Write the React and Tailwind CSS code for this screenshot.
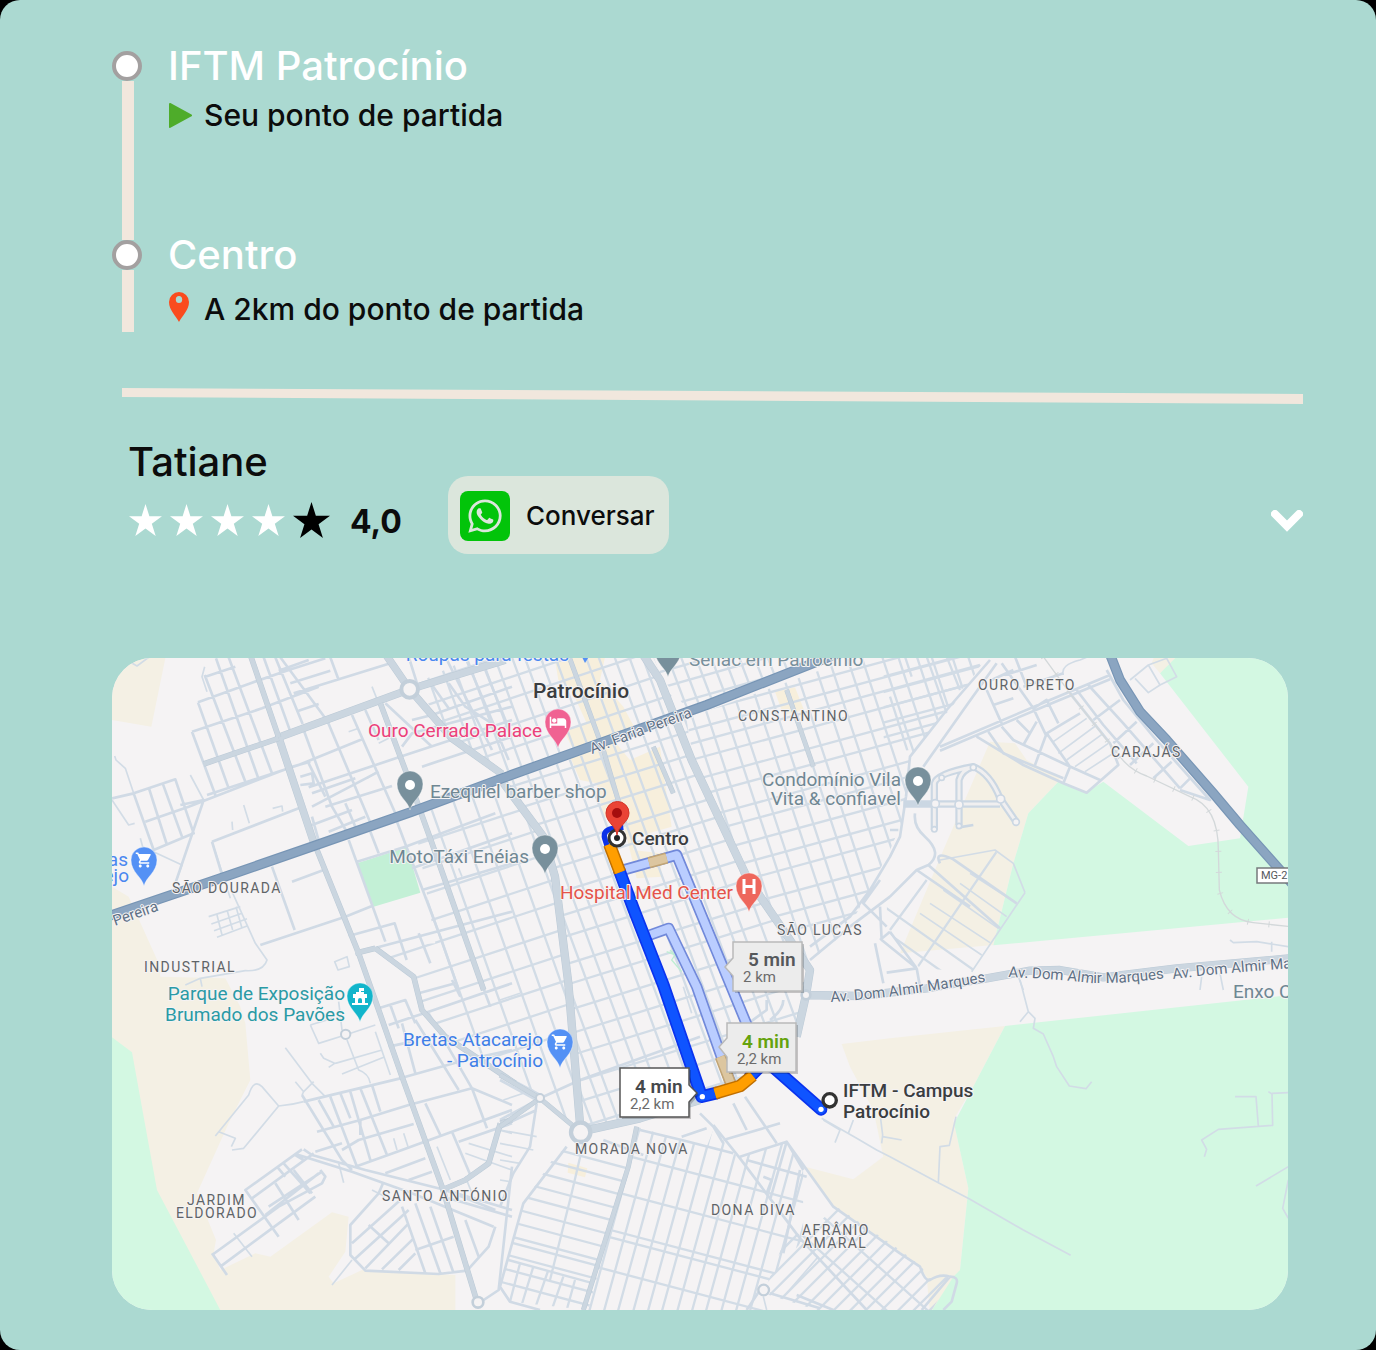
import React from "react";
import { FaWhatsapp } from "react-icons/fa";
import { MdShoppingCart, MdHotel } from "react-icons/md";

/* ---------- map geometry: three map units per screen pixel ---------- */

// Parallel streets: starts at (x, y), moves by the steps along one axis, each street follows (dx, dy).
function streets(x, y, axis, steps, dx, dy) {
  let d = "";
  let offset = 0;
  for (const step of steps) {
    const sx = axis === "x" ? x + offset : x;
    const sy = axis === "y" ? y + offset : y;
    d += `M${sx} ${sy}l${dx} ${dy}`;
    offset += step;
  }
  return d;
}

function repeat(pattern, count) {
  return Array.from({ length: count }, (_, i) => pattern[i % pattern.length]);
}

const DISTRICTS = [
  {
    id: "north-centre",
    at: "translate(500 650)",
    area: "5,375 550,185 480,90 435,0 -40,0 -250,100 -170,240",
    d: [
      streets(-330, 0, "x", repeat([44, 40, 52, 38, 48], 18), 150, 410),
      streets(-300, 120, "y", repeat([72, 64, 80, 70], 9), 900, -300),
    ],
  },
  {
    id: "centre",
    at: "translate(500 650)",
    area: "8,400 560,205 575,330 740,680 870,870 925,1010 890,1150 830,1180 790,1270 620,1350 240,1445 205,1000 165,680 130,560",
    d: [
      streets(-620, 190, "x", repeat([50, 42, 58, 44, 38, 60], 28), 465, 1260),
      streets(0, 420, "y", repeat([72, 66, 84, 62, 78], 19), 1000, -310),
    ],
  },
  {
    id: "north-east",
    at: "translate(500 650)",
    area: "450,0 1060,0 970,30 560,175 490,90",
    d: [
      streets(300, -50, "x", repeat([46, 40, 44], 17), 110, 290),
      streets(430, 80, "y", repeat([48, 60], 5), 600, -170),
    ],
  },
  {
    id: "constantino",
    at: "translate(500 650)",
    area: "560,205 990,50 1060,20 1470,20 1350,160 1230,320 1212,500 1170,600 1070,790 1000,880 920,940 870,870 740,680 580,330",
    d: [
      streets(300, 0, "x", repeat([48, 56, 44, 62], 22), 310, 940),
      streets(540, 290, "y", [49, 62, 50, 70, 46, 64, 60, 52, 74, 60, 55, 66], 900, -245),
      streets(540, 30, "y", [60, 52, 58, 48, 56], 960, -260),
    ],
  },
  {
    id: "west-centre",
    at: "translate(112 650)",
    area: "905,500 1170,400 1300,560 1330,680 1365,1000 1400,1440 1290,1340 1000,1170 930,1060 910,980 800,890 970,880",
    d: [
      streets(750, 200, "x", [110, 74, 62, 68, 72, 60, 64], 440, 1240),
      streets(800, 620, "y", [78, 80, 84, 72, 86, 76, 80, 74, 84, 80], 640, -210),
    ],
  },
  {
    id: "morada-nova-west",
    at: "translate(500 980)",
    area: "170,520 250,490 385,540 265,990 30,965 0,920 40,780 70,670",
    d: [
      streets(-30, 455, "y", [42, 42, 44, 40, 44, 42, 44, 18, 40, 44, 42, 42], 450, 120),
      "M250 490L215 640L150 900M60 850L30 965M100 860L65 975M145 870L105 985M190 890L155 990M225 900L200 990M25 840L280 910",
    ],
  },
  {
    id: "morada-nova",
    at: "translate(500 980)",
    area: "410,440 460,455 620,500 640,450 715,535 860,485 910,570 910,780 780,930 790,990 250,990 385,540",
    d: [
      streets(420, 440, "x", repeat([44, 42, 46], 16), -165, 600),
      streets(260, 495, "y", [118, 118, 22, 100, 90], 720, 190),
    ],
  },
  {
    id: "afranio",
    at: "translate(500 980)",
    area: "870,740 905,770 1010,680 1200,810 1265,860 1285,895 1355,890 1290,1000 950,990 790,940",
    d: [
      streets(560, 1000, "x", repeat([50, 46, 48], 20), 420, -420),
      streets(800, 560, "y", [110, 110], 560, 500),
    ],
  },
  {
    id: "sao-lucas-east",
    at: "translate(890 650)",
    area: "80,660 150,630 315,600 405,728 245,965 90,955 -10,840 -10,740",
    d: [
      streets(-200, 640, "y", [72, 72, 72, 72], 620, 440),
      "M320 605L80 955M110 690L0 840",
    ],
  },
  {
    id: "ouro-preto",
    at: "translate(890 650)",
    area: "-20,20 290,20 180,180 60,300 -20,310",
    d: [
      streets(-20, 80, "y", [46, 46, 46, 44, 44], 330, -88),
      "M45 20L65 80M110 20L170 190M170 20L210 120M0 140L55 310",
    ],
  },
];

const STREETS = [
  {
    at: "translate(112 650)",
    d: "M280 80L370 50M258 157L420 98L530 60L640 25M240 245L450 175L620 110M285 435L560 345L750 268M240 245L310 435M258 157L350 415M278 75L400 395M312 25L440 388M350 22L480 370M455 22L535 245M490 22L572 222M505 22L640 205M590 30L500 62M655 22L680 90M535 100L655 62M545 130L840 38M560 182L620 162M575 240L660 470M645 210L780 530M720 195L850 490M760 180L800 270M820 160L960 290M540 350L595 335M590 412L860 322L1200 210M600 470L800 365M590 340L640 440M600 430L730 385M640 470L840 408M600 500L625 590M660 470L710 555M700 460L730 530M600 525L720 480M650 545L760 500M565 380L600 370L605 400L565 405M0 445L65 430L190 388L245 550L125 600L65 430M110 412L165 585M152 400L210 560M100 515L230 470L540 350M205 465L275 450L190 700M300 575L560 475M300 575L335 690M445 885L700 800L780 768M480 650L548 840M540 695L635 660M710 570L820 875M775 545L800 610M855 515L985 860L1040 1020M735 635L880 590L1150 490M900 655L1200 550M930 720L1200 640M710 858L848 820L884 930M730 910L1200 785M920 850L955 940M960 105L1010 175M900 210L960 195L1200 110M1010 100L1060 170L1140 220M890 20L915 100M1000 20L1140 300M1060 22L1190 330M1120 60L1200 260M870 290L900 250L1200 170M930 350L1200 260",
  },
  {
    at: "translate(890 650)",
    d: "M300 30L170 180L60 320L48 440M320 40L220 180L100 350M150 290L480 150L660 75M150 302L480 162L660 88M260 260L400 345L520 400L590 428L685 345L660 280L540 130M295 245L340 310L520 385M335 230L370 270L530 345L630 390M400 285L440 215M435 345L470 250L570 190M470 250L540 350L520 400M380 210L420 250M290 120L335 220M335 40L430 175L470 260M375 20L410 110M305 90L370 60M310 165L370 145M345 75L440 45M430 175L470 150L505 220M400 110L520 70M560 120L640 225L740 340M595 105L700 220L870 415M610 210L690 150M670 280L740 215M650 60L700 150L790 260L960 450L870 420M720 345L790 280M790 385L845 335M870 415L900 385M75 490Q70 530 105 560Q160 610 115 645L80 660L0 740M80 660L240 770M150 640Q130 600 190 628L380 760M115 645L330 835M80 955L0 845M80 955L-10 968M80 955L90 1010M48 440L30 560L0 620L-60 720L-120 800L-240 890M0 740L-40 770L-120 830L-240 930M-30 770L-25 870L80 955M0 845L-30 870M-45 880L-20 1000M-30 690L-80 760L-10 830M0 540L25 540",
  },
  {
    at: "translate(112 980)",
    d: "M575 365L700 335L865 295L1060 240L1200 210M570 345L690 540L720 570M615 455L745 420L890 375L1080 325L1200 375M620 360L665 440M655 350L735 560M685 340L715 415M715 335L775 540M745 325L825 525M780 315L805 395M745 420L745 465M730 560L870 510L1020 455L1200 390M690 510L740 480L905 432M610 515L690 490M575 508L600 525L760 570L1000 630L1150 690M550 522L720 575L900 640L1145 740M570 508L400 630L500 770M605 520L420 655M550 525L575 540M495 560L520 590M515 550L595 640M630 575L470 680M460 705L620 580M300 825L500 680L630 610L640 590L625 570M325 860L480 745L610 650M490 610L560 720M545 570L600 640M300 820L345 885M815 605L800 640L715 735L715 825L760 872L980 882L1065 872M720 790L865 660M725 840L890 690M760 865L890 730M810 868L905 775M860 870L910 820M770 735L830 790M870 680L940 880M910 670L985 880M955 680L1025 880M910 810L1025 770M820 580L940 535M890 600L960 575M1040 485L1200 430M1020 455L1075 585M940 370L985 465M1080 325L1125 445M1060 720L1100 830M1000 630L1200 690M1010 655L1200 710M1150 740L1130 800L1065 872M1200 560L1160 930L1115 960M800 85L880 60L910 130M835 75L860 145M830 135L950 95L1200 10M830 200L900 185M870 130L910 280M910 120L1040 330M950 100L1080 325M1020 0L1045 50M1105 0L1135 80M920 40L1030 10",
  },
  {
    at: "translate(500 980)",
    d: "M640 435L720 535L900 775L1100 990M860 485L1000 680L1200 820L1260 860Q1275 905 1290 900Q1320 880 1350 890Q1375 890 1370 910L1355 965L1330 990M1350 890L1265 990M720 530L860 485L910 570M670 480L840 430M735 350L830 490M420 450L545 480L700 520M545 470L620 445M860 485L810 660M900 570L850 820M740 540L920 590M790 590L815 600L800 640M600 400L640 440L670 490M700 370L740 450M310 480L430 525M0 440L110 390M0 280L120 345M0 300L110 360M0 420L120 355M120 355L240 300L600 170M110 370L90 500L40 580L0 680M200 500L70 670L0 920L30 965L120 990M890 945L1000 990M810 940L960 985M780 930L740 990M800 60L800 90L745 130M850 60Q850 90 810 120",
  },
];

const LANES = [
  {
    at: "translate(112 650)",
    d: "M8 318L12 330L40 355L65 430M0 450L50 525L68 520M85 565L92 590L210 645L190 700M235 375L275 450M300 575L355 745M360 725L430 880L465 930Q455 965 400 962L265 985L220 1005M265 985L270 1010M290 800L385 770M298 822L390 790M306 842L405 806M315 862L405 828M315 795L330 855M345 780L362 840M372 770L390 835M668 935L705 920L712 950L678 960ZM395 465L412 520M482 475L510 468L512 485M278 50L270 80L285 125M0 60L30 22L75 48L110 22M710 245L740 235M765 385L795 365M780 110L800 160M800 280L830 265M1040 655L1050 680M360 515L362 540",
  },
  {
    at: "translate(890 650)",
    d: "M490 275L590 205M505 310L620 225M530 330L640 250M555 350L655 280M585 365L685 300M520 75Q510 45 570 30L590 22M720 90L775 45L830 25L860 80L810 105L775 128L735 85M775 45L810 105M1020 870L1030 878L1100 875L1195 890M1145 875L1145 905M405 728L370 640L315 600L150 630M405 728L245 965M380 760L240 670M350 800L210 700M325 835L160 720M300 878L120 760M275 915L90 790M385 980L400 1020M935 980L930 1020M990 970L1000 1020",
  },
  {
    at: "translate(112 980)",
    d: "M520 203L600 310L640 350M550 305L575 335L570 345M575 335L605 305M500 378Q540 375 575 365M310 468L410 345Q425 295 450 320L500 378L395 505L360 510M320 455L370 475L358 500M660 915L720 840M670 250L810 210M690 282L815 232M700 165L790 135M595 135L620 190L700 165M595 135L660 115M705 180L740 270Q770 280 775 310M625 220L635 235L668 250L650 262M790 155L835 285M845 475L855 510M875 460L888 500M680 550L695 608M365 760L420 830M975 500L1015 600M1060 520L1200 570M1070 490L1200 530M1160 450L1200 460M1060 590L1080 640M780 630L820 650M680 65L690 150",
  },
  {
    at: "translate(890 980)",
    d: "M390 0L415 95L435 115L430 145L460 162L490 230L500 260L538 318L588 326L605 305M415 95L390 125M-205 415L-100 475L-40 510L0 530L145 608L240 658L400 750L542 826M145 608L150 500L178 496L198 410M-25 490L-22 465L-30 400M-22 470L35 480M1035 350L1098 350L1105 438M1135 335L1146 342L1148 436L985 448L935 480L950 508L943 530M1146 340L1195 338M1098 618L1195 560M1195 600L1178 685L1195 715M-200 420L-150 450L-165 488M-110 420L-125 460",
  },
  {
    at: "translate(500 980)",
    d: "M955 830L860 940M550 20L575 100M0 450L110 470M0 490L100 510M0 540L60 550M0 600L30 605M10 360L100 330M30 390L45 420M790 950L800 990M0 60L60 40",
  },
];

const AVENUES = [
  {
    at: "translate(112 650)",
    w: 20,
    d: "M812 0L893 118L1020 265L1170 372M893 118L500 262L606 580M893 118L1180 30",
  },
  {
    at: "translate(112 650)",
    w: 14,
    d: "M410 0L500 262M275 342L500 265M615 600L740 910L800 1080L870 1280L990 1610L1095 1955M805 160L895 400L960 580L1115 1020M790 895L905 980L930 1080L1000 1160L1210 1300M730 910L790 895M1165 1420L1130 1540L1060 1590L990 1620M1165 1420L1200 1410",
  },
  {
    at: "translate(500 650)",
    w: 22,
    d: "M420 0L480 90L575 330L740 680L870 870L930 960L918 1035L890 1160M0 385L130 560L165 680L205 1000L242 1445L420 1405L600 1350M918 1035L1080 1038L1280 1015L1460 985L1590 962L1680 960L1810 982L2030 955L2370 925",
  },
  {
    at: "translate(500 650)",
    w: 12,
    d: "M200 0L310 300L375 520M860 120L940 350M410 1430L385 1550L250 1980M120 1345L240 1445M0 1275L120 1345L0 1430M460 290L520 430",
  },
];

const HIGHWAYS = [
  { at: "translate(112 650)", d: "M-20 802L310 690L605 588L900 485L1170 385L1434 290L1784 165L2230 -10" },
  { at: "translate(890 650)", d: "M655 0L690 90L750 185L830 270L970 430L1050 525L1210 705" },
];

const LAND = [
  { at: "translate(112 650)", fill: "#f4f0e4", p: "0,0 165,0 118,230 0,210" },
  {
    at: "translate(112 980)",
    fill: "#f4f0e4",
    p: "0,-280 50,-250 140,-50 145,-10 340,-5 385,80 400,130 415,300 350,430 255,640 312,780 305,820 325,870 430,820 475,830 660,697 710,710 700,815 650,890 665,910 750,870 1030,885 1030,1000 320,1000 0,800",
  },
  { at: "translate(112 980)", fill: "#d3f8e2", p: "0,172 60,217 95,410 135,630 230,810 330,1000 0,1000" },
  { at: "translate(500 650)", fill: "#f7efdc", p: "160,0 320,0 300,90 370,170 410,245 225,310 190,240 260,220 210,110 175,90" },
  {
    at: "translate(500 650)",
    fill: "#f7efdc",
    p: "210,320 340,270 390,330 480,290 495,400 515,530 410,560 400,600 480,610 485,680 410,685 370,520 310,500 290,400 240,390",
  },
  { at: "translate(500 650)", fill: "#f7efdc", p: "825,125 885,112 912,180 850,195" },
  { at: "translate(500 980)", fill: "#f7efdc", p: "205,548 262,565 255,592 203,578" },
  {
    at: "translate(890 650)",
    fill: "#f4f0e4",
    p: "300,275 375,280 410,330 510,385 505,395 415,490 370,640 310,885 30,910 160,600",
  },
  {
    at: "translate(890 650)",
    fill: "#d3f8e2",
    p: "860,0 1200,0 1200,803 310,886 370,640 415,490 505,395 590,425 640,395 895,588 1050,565 1075,410 810,70",
  },
  { at: "translate(890 650)", fill: "#f4f0e4", p: "785,40 800,0 880,0 810,70" },
  {
    at: "translate(890 980)",
    fill: "#f4f0e4",
    p: "-145,192 0,175 345,138 255,310 190,420 235,625 210,870 120,1000 110,890 80,850 0,795 -170,680 -255,560 -110,598 -20,530 -50,390 -120,260",
  },
  {
    at: "translate(890 980)",
    fill: "#d3f8e2",
    p: "345,138 1200,45 1200,1000 120,1000 190,890 210,870 235,625 192,430 255,310",
  },
];

/* ---------- map labels, in screen pixels ---------- */

const PLACES = [
  { x: 569, y: 661, end: true, color: "#4a87f0", text: "Roupas para festas" },
  { x: 689, y: 666, color: "#78909c", text: "Senac em Patrocínio" },
  { x: 542, y: 737, end: true, color: "#ec407a", text: "Ouro Cerrado Palace" },
  { x: 430, y: 798, color: "#6f8793", text: "Ezequiel barber shop" },
  { x: 529, y: 863, end: true, color: "#6f8793", text: "MotoTáxi Enéias" },
  { x: 901, y: 786, end: true, color: "#6f8793", text: "Condomínio Vila" },
  { x: 901, y: 805, end: true, color: "#6f8793", text: "Vita & confiavel" },
  { x: 733, y: 899, end: true, color: "#e5534a", text: "Hospital Med Center" },
  { x: 345, y: 1000, end: true, color: "#2a9aa5", text: "Parque de Exposição" },
  { x: 345, y: 1021, end: true, color: "#2a9aa5", text: "Brumado dos Pavões" },
  { x: 543, y: 1046, end: true, color: "#3f7fe8", text: "Bretas Atacarejo" },
  { x: 543, y: 1067, end: true, color: "#3f7fe8", text: "- Patrocínio" },
  { x: 128, y: 866, end: true, color: "#4a87f0", text: "as" },
  { x: 129, y: 882, end: true, color: "#4a87f0", text: "ejo" },
  { x: 1233, y: 998, color: "#6f8793", text: "Enxo C" },
];

const AREAS = [
  [172, 893, "SÃO DOURADA"],
  [144, 972, "INDUSTRIAL"],
  [978, 690, "OURO PRETO"],
  [1111, 757, "CARAJÁS"],
  [738, 721, "CONSTANTINO"],
  [777, 935, "SÃO LUCAS"],
  [187, 1205, "JARDIM"],
  [176, 1218, "ELDORADO"],
  [382, 1201, "SANTO ANTÓNIO"],
  [575, 1154, "MORADA NOVA"],
  [711, 1215, "DONA DIVA"],
  [802, 1235, "AFRÂNIO"],
  [803, 1248, "AMARAL"],
];

const PIN = "M0 0C-2 -9 -13 -14 -13 -26A13 13 0 1 1 13 -26C13 -14 2 -9 0 0Z";

function Pin({ x, y, color, children }) {
  return (
    <g transform={`translate(${x} ${y})`}>
      <path d={PIN} fill={color} stroke="#ffffff" strokeOpacity="0.4" strokeWidth="1" />
      {children || <circle cy="-25" r="5" fill="#ffffff" />}
    </g>
  );
}

function Tile({ at, children }) {
  return <g transform={`${at} scale(${1 / 3})`}>{children}</g>;
}

function Callout({ shape, fill, stroke, x, y, color, time, distance }) {
  return (
    <g>
      <path d={shape} transform="translate(2 2)" fill="#000000" fillOpacity="0.2" />
      <path d={shape} fill={fill} stroke={stroke} strokeWidth="1.5" />
      <text x={x + 5} y={y} fill={color} className="text-[19px] font-semibold">{time}</text>
      <text x={x} y={y + 16} fill="#6b6b6b" className="text-[15px]">{distance}</text>
    </g>
  );
}

function RouteMap() {
  return (
    <svg
      viewBox="112 658 1176 652"
      role="img"
      aria-label="Mapa da rota entre IFTM Patrocínio e Centro"
      className="block h-auto w-full rounded-[40px] bg-[#f5f3f4] font-[Roboto,sans-serif]"
    >
      <defs>
        {DISTRICTS.map((s) => (
          <clipPath id={s.id} key={s.id}>
            <polygon points={s.area} />
          </clipPath>
        ))}
        <path id="faria" d="M592 754L640 736L730 703" />
        <path id="pereira" d="M115 926L180 903" />
        <path id="marques-1" d="M831 1002Q900 998 1000 979" />
        <path id="marques-2" d="M1008 977Q1060 979 1090 983Q1130 984 1180 976" />
        <path id="marques-3" d="M1173 979Q1240 971 1340 965" />
      </defs>

      {LAND.map((l) => (
        <Tile at={l.at} key={l.p}>
          <polygon points={l.p} fill={l.fill} />
        </Tile>
      ))}
      <Tile at="translate(112 650)">
        <polygon points="735,640 885,592 925,728 785,770" fill="#c3f0d6" />
      </Tile>

      <g fill="none" strokeLinejoin="round">
        {DISTRICTS.map((s) => (
          <Tile at={s.at} key={s.id}>
            <g clipPath={`url(#${s.id})`} stroke="#d2dce6" strokeWidth="7">
              {s.d.map((d) => (
                <path d={d} key={d} />
              ))}
            </g>
          </Tile>
        ))}
        {LANES.map((s) => (
          <Tile at={s.at} key={s.d}>
            <path d={s.d} stroke="#d2dce6" strokeWidth="5" />
          </Tile>
        ))}
        {STREETS.map((s) => (
          <Tile at={s.at} key={s.d}>
            <path d={s.d} stroke="#d0dae5" strokeWidth="8" />
          </Tile>
        ))}
        {AVENUES.map((s) => (
          <Tile at={s.at} key={s.d}>
            <path d={s.d} stroke="#bccad6" strokeWidth={s.w + 3} />
            <path d={s.d} stroke="#cbd6e0" strokeWidth={s.w} />
          </Tile>
        ))}

        {/* railway on the east side */}
        <Tile at="translate(890 650)">
          <path
            d="M460 20L540 130L690 320Q720 360 770 378L900 440Q985 470 985 600L988 720Q1010 810 1090 818L1200 830"
            stroke="#d3d8da"
            strokeWidth="4"
          />
          <path
            d="M460 20L540 130L690 320Q720 360 770 378L900 440Q985 470 985 600L988 720Q1010 810 1090 818L1200 830"
            stroke="#d3d8da"
            strokeWidth="18"
            strokeDasharray="3 60"
          />
          <g stroke="#cbd7e3">
            <path d="M133 540V400Q140 370 250 350Q300 370 330 445L378 515M207 525V390Q215 360 250 350M40 462H330" strokeWidth="22" />
            <path d="M133 540V400Q140 370 250 350Q300 370 330 445L378 515M207 525V390Q215 360 250 350M140 462H330" stroke="#f0eff0" strokeWidth="9" />
            <path d="M207 532L250 525" strokeWidth="8" />
            <g fill="#f5f3f4" strokeWidth="5">
              <circle cx="136" cy="461" r="12" />
              <circle cx="207" cy="464" r="12" />
              <circle cx="332" cy="447" r="12" />
              <circle cx="250" cy="352" r="9" />
              <circle cx="378" cy="516" r="10" />
              <circle cx="155" cy="383" r="8" />
              <circle cx="133" cy="538" r="8" />
              <circle cx="207" cy="528" r="8" />
            </g>
          </g>
        </Tile>

        {HIGHWAYS.map((s) => (
          <Tile at={s.at} key={s.d}>
            <path d={s.d} stroke="#7795b5" strokeWidth="30" />
            <path d={s.d} stroke="#8ba5c1" strokeWidth="23" />
          </Tile>
        ))}

        <Tile at="translate(500 650)">
          <g fill="#f5f3f4" stroke="#c3cfda">
            <circle cx="-271" cy="118" r="25" strokeWidth="12" />
            <circle cx="242" cy="1447" r="29" strokeWidth="13" />
            <circle cx="918" cy="1035" r="13" strokeWidth="8" />
            <circle cx="791" cy="1920" r="16" strokeWidth="7" />
            <circle cx="120" cy="1344" r="12" strokeWidth="6" />
            <circle cx="-66" cy="1957" r="16" strokeWidth="8" />
            <circle cx="-463" cy="1153" r="14" strokeWidth="6" />
          </g>
          <path d="M500 905L525 915L515 930L545 965M510 900L540 930" stroke="#bdeed2" strokeWidth="4" />

          {/* alternative routes */}
          <path d="M370 660L530 615L650 905L745 1135M450 855L506 835L590 1010L692 1300" stroke="#7189da" strokeWidth="34" />
          <path d="M370 660L530 615L650 905L745 1135M450 855L506 835L590 1010L692 1300" stroke="#bacdff" strokeWidth="24" />
          <path d="M447 638L500 624M661 1220L692 1300" stroke="#c2a574" strokeWidth="34" />
          <path d="M447 638L500 624M661 1220L692 1300" stroke="#dcc6a0" strokeWidth="25" />

          {/* selected route */}
          <path d="M370 532L335 536Q308 542 314 565L322 590" stroke="#0b32e8" strokeWidth="16" />
          <path d="M358 662L400 775L490 1005L605 1340L650 1329M750 1280L790 1240L820 1252L963 1378" stroke="#0a33ee" strokeWidth="38" strokeLinecap="round" />
          <path d="M358 662L400 775L490 1005L605 1340L650 1329M750 1280L790 1240L820 1252L963 1378" stroke="#0f54ff" strokeWidth="28" strokeLinecap="round" />
          <path d="M328 583L360 667M645 1330L720 1308L758 1277" stroke="#c06f00" strokeWidth="38" />
          <path d="M328 583L360 667M645 1330L720 1308L758 1277" stroke="#ff9e00" strokeWidth="29" />
          <circle cx="607" cy="1340" r="8" fill="#ffffff" />
          <circle cx="963" cy="1378" r="8" fill="#ffffff" />
          <circle cx="989" cy="1351" r="20" fill="#ffffff" stroke="#333333" strokeWidth="10" />
        </Tile>
      </g>

      {/* labels */}
      <g stroke="#f5f3f4" strokeWidth="2" strokeLinejoin="round" style={{ paintOrder: "stroke" }}>
        <g className="text-[15px]" fill="#5f7186">
          <text><textPath href="#faria">Av. Faria Pereira</textPath></text>
          <text><textPath href="#pereira">Pereira</textPath></text>
          <text><textPath href="#marques-1">Av. Dom Almir Marques</textPath></text>
          <text><textPath href="#marques-2">Av. Dom Almir Marques</textPath></text>
          <text><textPath href="#marques-3">Av. Dom Almir Marques</textPath></text>
        </g>
        <g className="text-[14px] tracking-widest" fill="#5f6468">
          {AREAS.map(([x, y, text]) => (
            <text x={x} y={y} key={text}>{text}</text>
          ))}
        </g>
        <g className="text-[19px]">
          {PLACES.map((p) => (
            <text x={p.x} y={p.y} fill={p.color} textAnchor={p.end ? "end" : "start"} key={p.text}>
              {p.text}
            </text>
          ))}
        </g>
        <g className="text-[19px] font-medium" fill="#3a3d40">
          <text x="533" y="698" className="text-[21px]">Patrocínio</text>
          <text x="632" y="845">Centro</text>
          <text x="843" y="1097">IFTM - Campus</text>
          <text x="843" y="1118">Patrocínio</text>
        </g>
      </g>

      <rect x="1257" y="868" width="40" height="15" fill="#ffffff" stroke="#77797c" strokeWidth="1.5" />
      <text x="1261" y="879" fill="#55585b" className="text-[11px]">MG-2</text>

      {/* pins */}
      <Pin x={410} y={810} color="#78909c" />
      <Pin x={545} y={874} color="#78909c" />
      <Pin x={918} y={806} color="#78909c" />
      <Pin x={668} y={677} color="#78909c" />
      <path d="M581 655L585 663L590 655Z" fill="#5491f5" />
      <Pin x={144} y={886} color="#5491f5">
        <MdShoppingCart x={-9} y={-35} size={18} color="#ffffff" />
      </Pin>
      <Pin x={560} y={1068} color="#5491f5">
        <MdShoppingCart x={-9} y={-35} size={18} color="#ffffff" />
      </Pin>
      <Pin x={558} y={748} color="#f06292">
        <MdHotel x={-9} y={-35} size={18} color="#ffffff" />
      </Pin>
      <Pin x={749} y={912} color="#ee675c">
        <path d="M-5 -33V-18M5 -33V-18M-5 -25.500H5" stroke="#ffffff" strokeWidth="3" fill="none" />
      </Pin>
      <Pin x={360} y={1022} color="#12b5cb">
        <path d="M-7 -28H-4V-30H-1V-34H4V-31H1V-30H4V-28H7V-24H5V-19H8V-17H-8V-19H-5V-24H-7ZM-2 -19H2V-22A2 2 0 0 0 -2 -22Z" fill="#ffffff" fillRule="evenodd" />
      </Pin>

      {/* destination */}
      <circle cx="617" cy="838" r="8" fill="#ffffff" stroke="#333333" strokeWidth="3" />
      <circle cx="617" cy="838" r="3" fill="#222222" />
      <path d="M617 835C616 826 606 822 606 813A11 11 0 1 1 629 813C629 822 618 826 617 835Z" fill="#ea4335" stroke="#d33427" strokeWidth="1" />
      <circle cx="617" cy="813" r="5" fill="#a50e0e" />

      <Callout shape="M733 942H802V991H733V976L725 967L733 958Z" fill="#ececec" stroke="#b9b9b9" x={743} y={966} color="#55585b" time="5 min" distance="2 km" />
      <Callout shape="M727 1023H796V1072H727V1057L719 1047L727 1038Z" fill="#ececec" stroke="#b9b9b9" x={737} y={1048} color="#65a30d" time="4 min" distance="2,2 km" />
      <Callout shape="M620 1068H689V1085L697 1093L689 1102V1117H620Z" fill="#ffffff" stroke="#555555" x={630} y={1093} color="#45484b" time="4 min" distance="2,2 km" />
    </svg>
  );
}

function Stop({ name, detail, icon, className, detailClass }) {
  return (
    <li className={`flex gap-[26px] ${className}`}>
      <div className="flex w-[30px] shrink-0 flex-col items-center">
        <span className="size-[30px] shrink-0 rounded-full border-4 border-[#a3a0a0] bg-white" />
        <span className="ml-0.5 w-3 grow bg-[#f1e7dd]" />
      </div>
      <div>
        <h2 className="text-[40px] font-medium leading-[30px] text-white">{name}</h2>
        <p className={`flex items-center gap-3 text-[30px] font-medium leading-10 ${detailClass}`}>
          <span className="flex w-6">{icon}</span>
          {detail}
        </p>
      </div>
    </li>
  );
}

function Star({ className }) {
  return (
    <svg viewBox="0 0 34 33" className={className} fill="currentColor" aria-hidden="true">
      <polygon points="17,0 21,12.600 34,12.600 23.500,20.400 27.500,33 17,25.200 6.500,33 10.500,20.400 0,12.600 13,12.600" />
    </svg>
  );
}

export default function App() {
  return (
    <div className="bg-black font-[Inter,sans-serif] text-[#0c0c0c]">
      <main className="flex min-h-screen flex-col rounded-[20px] bg-[#abd9d1] pb-10 pl-28 pr-[88px] pt-[51px]">
        <ol>
          <Stop
            name="IFTM Patrocínio"
            detail="Seu ponto de partida"
            className="h-[189px]"
            detailClass="mt-[14px]"
            icon={
              <svg viewBox="0 0 24 26" className="ml-px mt-px w-6" aria-hidden="true">
                <path d="M1 1L23 13L1 25Z" fill="#4eac2a" stroke="#4eac2a" strokeWidth="2" strokeLinejoin="round" />
              </svg>
            }
          />
          <Stop
            name="Centro"
            detail="A 2km do ponto de partida"
            className="h-[92px]"
            detailClass="mt-[19px]"
            icon={
              <svg viewBox="0 0 20 30" className="mb-1 ml-px w-5" aria-hidden="true">
                <path
                  d="M10 0A10 10 0 0 0 0 10C0 18 7 24 10 30C13 24 20 18 20 10A10 10 0 0 0 10 0ZM10 4A3.200 3.500 0 1 1 10 11A3.200 3.500 0 1 1 10 4Z"
                  fill="#fa4b1e"
                  fillRule="evenodd"
                />
              </svg>
            }
          />
        </ol>

        <svg viewBox="0 0 1181 16" preserveAspectRatio="none" className="ml-[10px] mr-[-15px] mt-14 h-4 self-stretch" aria-hidden="true">
          <polygon points="0,0 1181,6 1181,16 0,9" fill="#f1e7dd" />
        </svg>

        <section className="mr-[-15px] mt-[37px] flex items-start pl-4">
          <div className="w-80">
            <h3 className="text-[40px] font-medium leading-[42px]">Tatiane</h3>
            <div className="mt-[18px] flex items-center">
              <div className="ml-px flex items-center gap-2" role="img" aria-label="4 de 5 estrelas">
                <Star className="w-[33px] text-white" />
                <Star className="w-[33px] text-white" />
                <Star className="w-[33px] text-white" />
                <Star className="w-[33px] text-white" />
                <Star className="w-[37px] text-black" />
              </div>
              <span className="ml-5 pt-[3px] text-[32px] font-bold leading-[35px]">4,0</span>
            </div>
          </div>
          <button type="button" className="mt-[35px] flex items-center gap-4 rounded-[20px] bg-[#dbe6dc] pb-[13px] pl-3 pr-[14px] pt-[14px] text-[26px] font-medium leading-[51px]">
            <span className="flex size-[50px] items-center justify-center rounded-lg bg-[#02c40a]">
              <FaWhatsapp size={38} color="#dbe6dc" />
            </span>
            Conversar
          </button>
          <button type="button" aria-label="Mostrar detalhes" className="ml-auto mt-[69px]">
            <svg viewBox="0 0 32 22" className="w-8" aria-hidden="true">
              <path d="M4 4L16 16L28 4" fill="none" stroke="#ffffff" strokeWidth="8" strokeLinecap="round" />
            </svg>
          </button>
        </section>

        <section className="mt-[104px]">
          <RouteMap />
        </section>
      </main>
    </div>
  );
}
